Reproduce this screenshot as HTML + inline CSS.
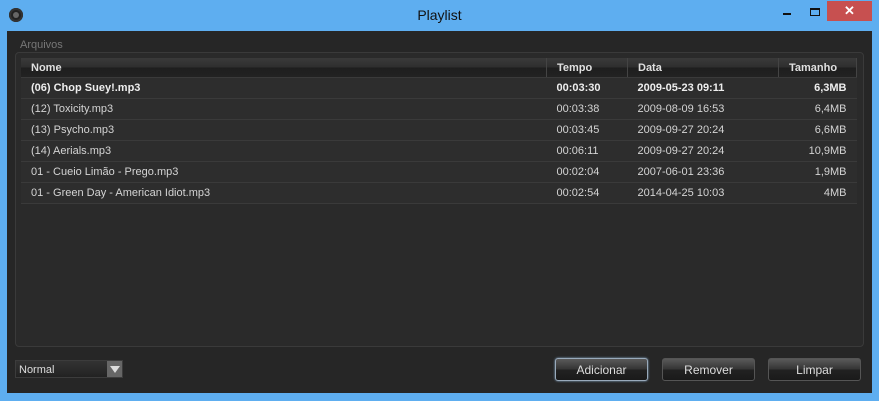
<!DOCTYPE html>
<html><head><style>
body{margin:0;width:879px;height:401px;background:#5eaef0;font-family:"Liberation Sans",sans-serif;position:relative;overflow:hidden}
.title{position:absolute;left:0;top:0;width:879px;height:31px;text-align:center;line-height:31px;font-size:14px;color:#111}
.ico{position:absolute;left:9px;top:8px;width:14px;height:14px;border-radius:50%;background:#222;box-shadow:inset 0 0 0 2px #333}
.ico:after{content:"";position:absolute;left:4px;top:4px;width:6px;height:6px;border-radius:50%;background:#666}
.min{position:absolute;left:783px;top:13px;width:8px;height:2px;background:#111}
.max{position:absolute;left:810px;top:8px;width:8px;height:5px;border:1px solid #111;border-top-width:2px}
.close{position:absolute;left:827px;top:1px;width:45px;height:20px;background:#c75050;color:#fff;text-align:center;line-height:20px;font-size:13px;font-weight:bold}
.main{position:absolute;left:7px;top:31px;width:865px;height:362px;background:#262626}
.lbl{position:absolute;left:13px;top:8px;font-size:11px;color:#777}
.box{position:absolute;left:8px;top:21px;width:847px;height:293px;border:1px solid #3a3a3a;border-radius:4px;background:#2a2a2a}
table{position:absolute;left:14px;top:27px;width:836px;border-collapse:collapse;font-size:11px;color:#d4d4d4}
td,th{height:20px;padding:0 10px;border-bottom:1px solid #3a3a3a;white-space:nowrap}
th{text-align:left;background:linear-gradient(#3a3a3a,#2e2e2e 50%,#1e1e1e 50%,#222);border-right:1px solid #444;height:19px;color:#e0e0e0}
td{background:#2d2d2d}
tr.b td{font-weight:bold;color:#eee}
.r{text-align:right}
.combo{position:absolute;left:8px;top:329px;height:18px;border:1px solid #3c3c3c;background:linear-gradient(#333,#222);font-size:11px;color:#ddd;line-height:18px;padding-left:3px;box-sizing:border-box;width:108px}
.combo i{position:absolute;right:0;top:0;width:15px;height:16px;background:#666}
.combo i:after{content:"";position:absolute;left:3px;top:5px;border:5px solid transparent;border-top:7px solid #ddd;border-bottom:0}
.btn{position:absolute;top:327px;width:93px;height:23px;border:1px solid #555;border-radius:3px;background:linear-gradient(#5a5a5a,#333 50%,#222 51%,#1a1a1a);color:#ddd;font-size:12px;text-align:center;line-height:23px;box-sizing:border-box}
</style></head><body>
<div class="title">Playlist</div><div class="ico"></div><div class="min"></div><div class="max"></div><div class="close">✕</div>
<div class="main">
<div class="lbl">Arquivos</div>
<div class="box"></div>
<table>
<tr><th style="width:505px">Nome</th><th style="width:60px">Tempo</th><th style="width:130px">Data</th><th>Tamanho</th></tr>
<tr class="b"><td>(06) Chop Suey!.mp3</td><td>00:03:30</td><td>2009-05-23 09:11</td><td class="r">6,3MB</td></tr>
<tr><td>(12) Toxicity.mp3</td><td>00:03:38</td><td>2009-08-09 16:53</td><td class="r">6,4MB</td></tr>
<tr><td>(13) Psycho.mp3</td><td>00:03:45</td><td>2009-09-27 20:24</td><td class="r">6,6MB</td></tr>
<tr><td>(14) Aerials.mp3</td><td>00:06:11</td><td>2009-09-27 20:24</td><td class="r">10,9MB</td></tr>
<tr><td>01 - Cueio Limão - Prego.mp3</td><td>00:02:04</td><td>2007-06-01 23:36</td><td class="r">1,9MB</td></tr>
<tr><td>01 - Green Day - American Idiot.mp3</td><td>00:02:54</td><td>2014-04-25 10:03</td><td class="r">4MB</td></tr>
</table>
<div class="combo">Normal<i></i></div>
<div class="btn" style="left:548px;border-color:#9ab;box-shadow:0 0 2px #8ac">Adicionar</div>
<div class="btn" style="left:655px">Remover</div>
<div class="btn" style="left:761px">Limpar</div>
</div>
</body></html>
